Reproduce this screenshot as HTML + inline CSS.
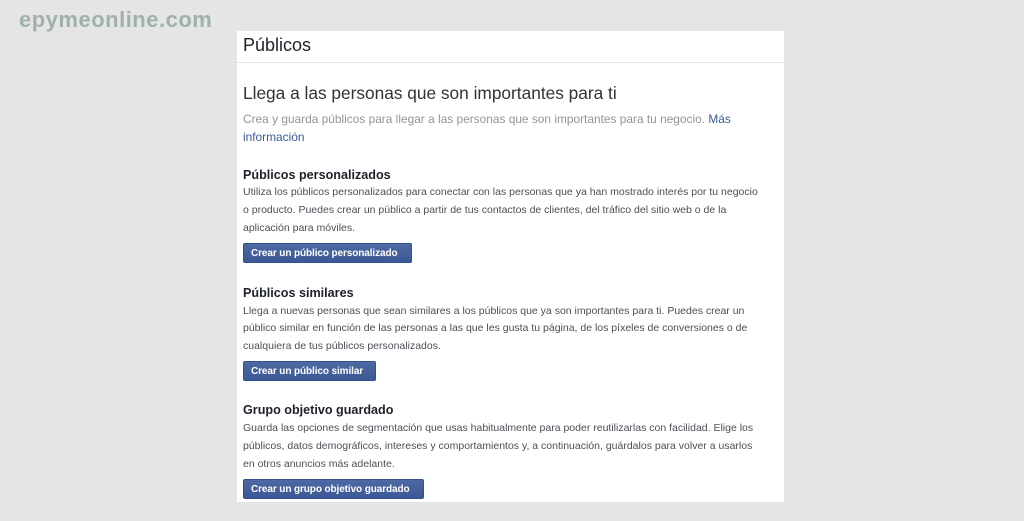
<!DOCTYPE html>
<html><head><meta charset="utf-8"><style>
body{margin:0;width:1024px;height:521px;background:#e5e5e5;font-family:"Liberation Sans",sans-serif;position:relative;overflow:hidden}
.logo{position:absolute;left:19px;top:7px;font-size:22px;font-weight:bold;color:#9fb0ad;letter-spacing:0.5px}
.panel{position:absolute;left:237px;top:31px;width:547px;height:471px;background:#fff}
.hdr{position:absolute;left:6px;top:4px;font-size:18px;color:#1d2129}
.div{position:absolute;left:0;top:31px;width:547px;height:1px;background:#e5e5e5}
.a{position:absolute;left:6px;white-space:nowrap}
.h1{font-size:17.3px;color:#333}
.sub{font-size:11.9px;color:#90949c}
.link{color:#3b5998}
.h2{font-size:12.6px;font-weight:bold;color:#1d2129}
.t{font-size:10.5px;color:#4b4f56}
.btn{position:absolute;left:6px;height:20px;background:linear-gradient(#4e69a2,#3b5998);border:1px solid #35508a;box-sizing:border-box;color:#fff;font-size:10px;font-weight:bold;line-height:20px;padding:0 7px;white-space:nowrap;border-radius:2px;letter-spacing:-0.1px}
</style></head><body>
<div class="logo">epymeonline.com</div>
<div class="panel">
<div class="hdr">Públicos</div>
<div class="div"></div>
<div class="a h1" style="top:52px">Llega a las personas que son importantes para ti</div>
<div class="a sub" style="top:81px">Crea y guarda públicos para llegar a las personas que son importantes para tu negocio. <span class="link">Más</span></div>
<div class="a sub link" style="top:99px">información</div>
<div class="a h2" style="top:137px">Públicos personalizados</div>
<div class="a t" style="top:155px">Utiliza los públicos personalizados para conectar con las personas que ya han mostrado interés por tu negocio</div>
<div class="a t" style="top:173px">o producto. Puedes crear un público a partir de tus contactos de clientes, del tráfico del sitio web o de la</div>
<div class="a t" style="top:191px">aplicación para móviles.</div>
<div class="btn" style="top:212px;width:169px">Crear un público personalizado</div>
<div class="a h2" style="top:255px">Públicos similares</div>
<div class="a t" style="top:274px">Llega a nuevas personas que sean similares a los públicos que ya son importantes para ti. Puedes crear un</div>
<div class="a t" style="top:291px">público similar en función de las personas a las que les gusta tu página, de los píxeles de conversiones o de</div>
<div class="a t" style="top:309px">cualquiera de tus públicos personalizados.</div>
<div class="btn" style="top:330px;width:133px">Crear un público similar</div>
<div class="a h2" style="top:372px">Grupo objetivo guardado</div>
<div class="a t" style="top:391px">Guarda las opciones de segmentación que usas habitualmente para poder reutilizarlas con facilidad. Elige los</div>
<div class="a t" style="top:409px">públicos, datos demográficos, intereses y comportamientos y, a continuación, guárdalos para volver a usarlos</div>
<div class="a t" style="top:427px">en otros anuncios más adelante.</div>
<div class="btn" style="top:448px;width:181px">Crear un grupo objetivo guardado</div>
</div>
</body></html>
